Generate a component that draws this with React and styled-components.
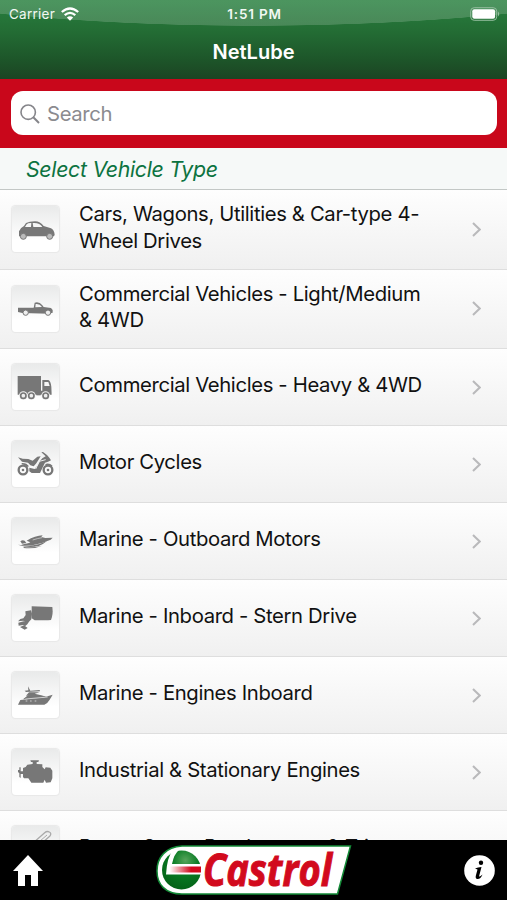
import React from "react";
import styled, { createGlobalStyle } from "styled-components";

const GlobalStyle = createGlobalStyle`
  * {
    box-sizing: border-box;
  }

  body {
    margin: 0;
    font-family: Inter, "Liberation Sans", sans-serif;
    background: #000;
  }
`;

const Screen = styled.div`
  width: 507px;
  height: 900px;
  display: flex;
  flex-direction: column;
  overflow: hidden;
`;

const Header = styled.header`
  height: 79px;
  flex-shrink: 0;
  color: #fff;
  background:
    radial-gradient(ellipse 580px 120px at 50% -94px, rgba(255, 255, 255, 0.17) 99.6%, transparent 100%),
    linear-gradient(#28803f 0, #236c34 32px, #1d5529 60px, #1c4423 79px);
`;

const StatusBar = styled.div`
  height: 27px;
  padding: 0 7px 0 9px;
  display: grid;
  grid-template-columns: 1fr auto 1fr;
  align-items: center;
  font-size: 13.5px;
  letter-spacing: 0.25px;
  color: #f1f8f2;
`;

const Carrier = styled.div`
  display: flex;
  align-items: center;
  gap: 6px;
`;

const Clock = styled.div`
  font-weight: 600;
  letter-spacing: 0.8px;
`;

const BatteryIcon = styled.svg`
  justify-self: end;
`;

const Title = styled.h1`
  margin: 0;
  height: 51px;
  line-height: 51px;
  text-align: center;
  font-size: 20px;
  font-weight: 600;
`;

const SearchBar = styled.div`
  height: 69px;
  flex-shrink: 0;
  padding: 12px 10px 13px 11px;
  background: #c9071b;
`;

const SearchField = styled.div`
  height: 44px;
  padding: 1px 9px 0;
  display: flex;
  align-items: center;
  gap: 7px;
  border-radius: 12px;
  background: #fff;
  color: #8b8b8f;
  font-size: 20.3px;
  letter-spacing: -0.35px;
`;

const SectionTitle = styled.h2`
  margin: 0;
  height: 42px;
  flex-shrink: 0;
  padding-left: 26px;
  line-height: 43px;
  font-size: 21.3px;
  font-weight: 400;
  font-style: italic;
  letter-spacing: -0.3px;
  color: #0c7340;
  background: #f6f9f8;
  border-bottom: 1px solid #c3c8c6;
`;

const List = styled.ul`
  margin: 0;
  padding: 0;
  flex: 1;
  min-height: 0;
  overflow: hidden;
  list-style: none;
`;

const Row = styled.li`
  height: ${(props) => (props.$tall ? "79.5px" : "77px")};
  padding: 0 26px 0 12px;
  display: flex;
  align-items: center;
  background: linear-gradient(#fefefe, #f0f0f0);
  border-bottom: 1px solid #dedede;
`;

const Tile = styled.div`
  width: 47px;
  height: 46px;
  flex-shrink: 0;
  border-radius: 4px;
  background: linear-gradient(#e9eaea, #fff 75%);
  box-shadow: 0 0 1px 0.5px #e8e8e8;
  color: #777;

  svg {
    display: block;
  }
`;

const Label = styled.span`
  width: 356px;
  margin-left: 20px;
  padding-bottom: 3px;
  font-size: 20.3px;
  line-height: 26.5px;
  letter-spacing: -0.36px;
  color: #111;
  white-space: pre;
`;

const Chevron = styled.svg`
  margin-left: auto;
`;

const Footer = styled.footer`
  height: 60px;
  flex-shrink: 0;
  padding: 0 12px 0 13px;
  display: flex;
  align-items: center;
  justify-content: space-between;
  background: #000;
`;

const CarIcon = () => (
  <>
    <path
      fillRule="evenodd"
      d="M21 88 L21 76 Q25 65 36 60 L42 51 Q52 46 69 46 Q85 46 95 60 L117 67 Q127 72 128 86 L126 91 L21 91Z M39 63 L57 63 L58 51 Q49 50 44 55Z M62 51 L64 63 L91 63 Q83 49 62 51Z"
    />
    <circle cx="34" cy="91" r="9" fill="#bbb" stroke="currentColor" strokeWidth="3" />
    <circle cx="113" cy="91" r="9" fill="#bbb" stroke="currentColor" strokeWidth="3" />
  </>
);

const PickupIcon = () => (
  <>
    <path
      fillRule="evenodd"
      d="M18 65 H65 L68 50 Q82 46 91 58 L95 63 L117 66 L122 72 V80 L111 83 L31 81 L18 78Z M71 54 L70 64 L90 63 Q83 52 71 54Z"
    />
    <circle cx="41" cy="80" r="8" fill="#eee" stroke="currentColor" strokeWidth="3" />
    <circle cx="108" cy="80" r="8" fill="#eee" stroke="currentColor" strokeWidth="3" />
  </>
);

const TruckIcon = () => (
  <>
    <path
      fillRule="evenodd"
      d="M17 36 H87 V80 H91 V48 H109 Q116 50 118 68 L119 92 H17Z M97 54 V66 H113 L109 54Z"
    />
    <g fill="#f4f4f4">
      <circle cx="34" cy="95" r="13" />
      <circle cx="58" cy="95" r="13" />
      <circle cx="101" cy="95" r="13" />
    </g>
    <path d="M73 86 h13 v8 h-13z" />
    <g fill="#eee" stroke="currentColor" strokeWidth="5">
      <circle cx="34" cy="95" r="8" />
      <circle cx="58" cy="95" r="8" />
      <circle cx="101" cy="95" r="8" />
    </g>
  </>
);

const MotorcycleIcon = () => (
  <>
    <g fill="none" stroke="currentColor" strokeWidth="7">
      <circle cx="33" cy="87" r="13" />
      <circle cx="108" cy="87" r="13" />
    </g>
    <circle cx="33" cy="87" r="4" />
    <circle cx="108" cy="87" r="4" />
    <path d="M18 49 L32 53 L49 54 L62 59 L76 47 L86 46 L81 54 L73 67 L65 76 L55 73 L48 65 L30 62Z" />
    <path d="M88 34 L93 33 L105 42 L112 50 L117 58 L108 62 L99 65 L93 77 L84 96 H59 L52 91 L52 80 L68 84 L77 73 L84 60 L91 52 L101 46Z" />
    <path d="M29 66 Q44 65 51 76 L45 78 Q38 70 29 70Z M100 69 Q112 65 122 74 L117 76 Q108 70 101 74Z" />
    <path d="M71 84 L82 61 L101 56" fill="none" stroke="#eee" strokeWidth="3" />
  </>
);

const SpeedboatIcon = () => (
  <>
    <path d="M25 70 Q31 65 38 68 L43 75 L30 77Z M44 68 Q70 53 92 52 L88 57 L100 60 Q112 59 122 59 L116 65 Q91 76 64 81 Q46 83 28 80 Q48 77 55 73Z" />
    <path d="M18 80 Q38 83 64 82 Q84 79 105 69 Q95 78 80 84 Q50 92 18 80Z M35 90 Q65 94 91 83 Q65 90 35 87Z" />
    <path d="M62 66 Q77 61 90 59" fill="none" stroke="#ddd" strokeWidth="2" />
  </>
);

const SternDriveIcon = () => (
  <>
    <path d="M59 34 L121 36 Q124 58 117 75 L108 76 L68 76 L59 70Z" />
    <path d="M40 49 L57 46 L60 56 L58 73 L51 80 L46 88 L39 94 L30 87 L39 82 L34 77 L18 79 L25 72 L34 70 L41 60Z" />
    <path d="M19 83 L35 79 L42 84 L33 90 L20 92Z M24 96 L36 91 L47 99 L38 104Z" />
  </>
);

const YachtIcon = () => (
  <>
    <path d="M18 98 L25 84 Q50 80 91 77 L122 68 L113 83 Q107 94 97 98Z" />
    <path d="M33 82 L45 72 L67 69 L104 73 L86 79Z M42 71 L51 61 L83 61 L68 65 L94 71Z" />
    <path d="M48 43 L55 56 L83 54 L84 58 L42 60 L38 56 L49 55Z" />
    <path d="M40 81 L107 75 M41 87 h5 M54 87 h5 M68 87 h5" fill="none" stroke="#ddd" strokeWidth="2.5" />
  </>
);

const EngineIcon = () => (
  <path d="M55 34 L81 34 L79 39 L74 39 V45 L91 46 V54 L98 61 L101 55 L115 56 L121 65 V88 L116 100 L102 101 L98 92 L94 101 L58 101 L49 88 L36 88 L33 84 V75 H26 V87 L22 84 V73 L18 69 V63 L22 63 V55 H26 V67 H33 V57 L41 54 L46 47 L62 45 V39 L57 39Z" />
);

const ChainsawIcon = () => (
  <g fill="none" stroke="#aaa">
    <path d="M70 45 L98 20 Q105 14 112 18 Q120 22 113 31 L90 51" strokeWidth="4" />
    <path d="M84 45 L105 27" strokeWidth="3" />
  </g>
);

const vehicles = [
  {
    label: "Cars, Wagons, Utilities & Car-type 4-\nWheel Drives",
    icon: CarIcon,
    tall: true,
  },
  {
    label: "Commercial Vehicles - Light/Medium\n& 4WD",
    icon: PickupIcon,
    tall: true,
  },
  { label: "Commercial Vehicles - Heavy & 4WD", icon: TruckIcon },
  { label: "Motor Cycles", icon: MotorcycleIcon },
  { label: "Marine - Outboard Motors", icon: SpeedboatIcon },
  { label: "Marine - Inboard - Stern Drive", icon: SternDriveIcon },
  { label: "Marine - Engines Inboard", icon: YachtIcon },
  { label: "Industrial & Stationary Engines", icon: EngineIcon },
  { label: "Power Saws, Brushcutters & Trimmers", icon: ChainsawIcon },
];

const VehicleRow = ({ label, icon: Icon, tall }) => (
  <Row $tall={tall}>
    <Tile>
      <svg width="48" height="46" viewBox="0 0 144 138" fill="currentColor">
        <Icon />
      </svg>
    </Tile>
    <Label>{label}</Label>
    <Chevron width="9" height="15" viewBox="0 0 9 15" fill="none" stroke="#b9b9bb" strokeWidth="2">
      <path d="M1 1 L7.7 7.5 L1 14" />
    </Chevron>
  </Row>
);

const WifiIcon = () => (
  <svg width="18" height="14" viewBox="0 0 18 14" fill="none" stroke="#fff" strokeWidth="2.3">
    <path d="M0.8 5 Q9 -2 17.2 5" />
    <path d="M3.7 8.1 Q9 3.6 14.3 8.1" />
    <path d="M9 13.7 L5.8 10.6 Q9 8 12.2 10.6Z" fill="#fff" stroke="none" />
  </svg>
);

const CastrolLogo = () => (
  <svg width="196" height="51" viewBox="0 0 196 51">
    <defs>
      <radialGradient id="ball" cx="60%" cy="25%" r="75%">
        <stop offset="0" stopColor="#55a45a" />
        <stop offset="0.45" stopColor="#087b23" />
        <stop offset="1" stopColor="#056318" />
      </radialGradient>
      <linearGradient id="bar">
        <stop offset="0.05" stopColor="#fff" />
        <stop offset="0.7" stopColor="#d20a1d" />
      </linearGradient>
    </defs>
    <path d="M26 1 H194.5 L181.5 49 H26 C9 49 1 39 1 26 C1 12 10 2 26 1Z" fill="#fff" stroke="#138a37" strokeWidth="1.5" />
    <circle cx="25.5" cy="25" r="19.5" fill="url(#ball)" />
    <path d="M17 5 Q11 12 10 29.5 H46 V19 H16 Q18 9 23 5Z" fill="#fff" />
    <path d="M14 21.5 H45 V27.5 H12Z" fill="url(#bar)" />
    <text
      x="47"
      y="41"
      textLength="129"
      lengthAdjust="spacingAndGlyphs"
      fontFamily="Open Sans, sans-serif"
      fontSize="44"
      fontWeight="700"
      fontStyle="italic"
      fill="#d20a1d"
      stroke="#d20a1d"
      strokeWidth="1"
    >
      Castrol
    </text>
  </svg>
);

const App = () => {
  return (
    <Screen>
      <GlobalStyle />
      <Header>
        <StatusBar>
          <Carrier>
            Carrier
            <WifiIcon />
          </Carrier>
          <Clock>1:51 PM</Clock>
          <BatteryIcon width="30" height="14" viewBox="0 0 30 14">
            <rect x="0.7" y="0.7" width="26" height="12.6" rx="3.5" fill="none" stroke="#94bd9e" />
            <rect x="2.3" y="2.3" width="22.8" height="9.4" rx="2" fill="#fff" />
            <path d="M28 4.5 Q30.5 7 28 9.5Z" fill="#94bd9e" />
          </BatteryIcon>
        </StatusBar>
        <Title>NetLube</Title>
      </Header>
      <SearchBar>
        <SearchField>
          <svg width="20" height="20" viewBox="0 0 20 20" fill="none" stroke="#85858a" strokeWidth="1.6">
            <circle cx="8.2" cy="8.2" r="7.2" />
            <path d="M13.3 13.3 L19 19" strokeWidth="2" />
          </svg>
          Search
        </SearchField>
      </SearchBar>
      <SectionTitle>Select Vehicle Type</SectionTitle>
      <List>
        {vehicles.map((vehicle) => (
          <VehicleRow key={vehicle.label} {...vehicle} />
        ))}
      </List>
      <Footer>
        <svg width="30" height="31" viewBox="0 0 30 31" fill="#fff">
          <path d="M15 0 L30 16 H25 V31 H18 V20 H12 V31 H5 V16 H0Z" />
        </svg>
        <CastrolLogo />
        <svg width="31" height="31" viewBox="0 0 31 31">
          <circle cx="15.5" cy="15.5" r="15.3" fill="#fff" />
          <circle cx="17" cy="7.7" r="2.2" />
          <path d="M11 13.5 Q14 12 17.5 12 L15 21.5 Q16 22 18.5 19.5 Q16.5 24.5 13 24 Q11 23.5 12 20 L13.5 14.5Z" />
        </svg>
      </Footer>
    </Screen>
  );
};

export default App;
